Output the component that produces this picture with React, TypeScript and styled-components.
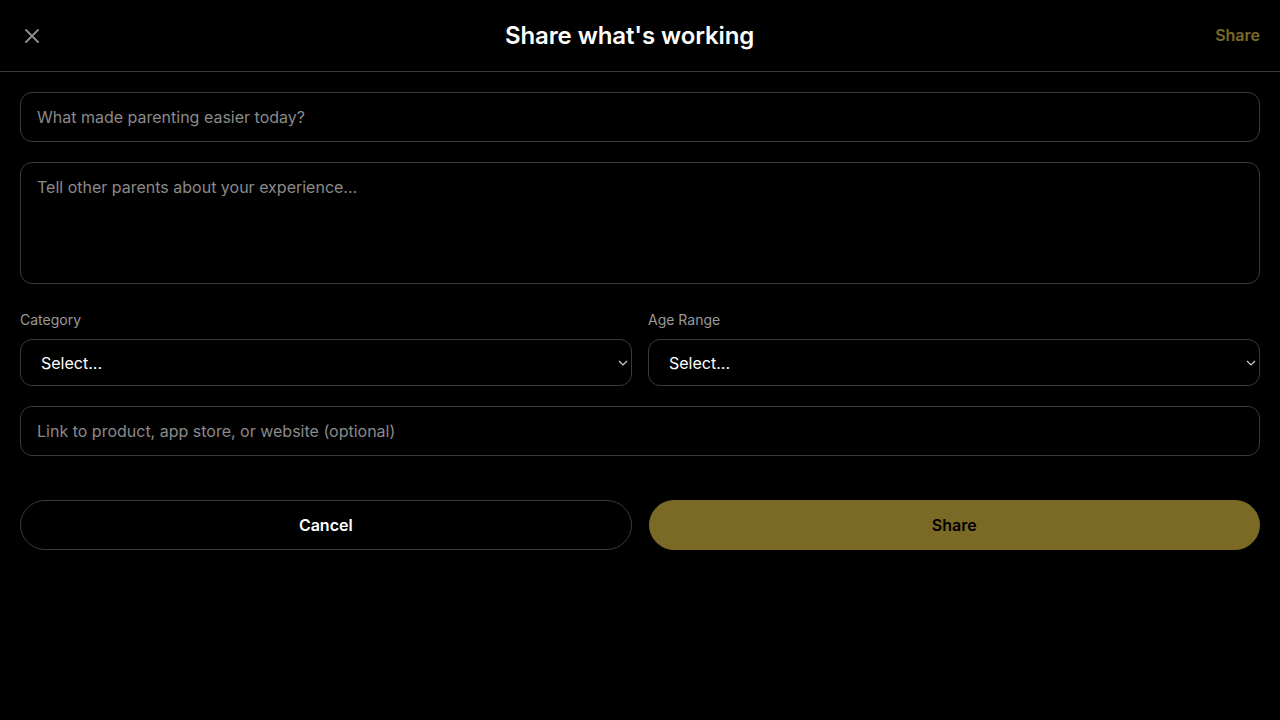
import React from "react";
import styled, { createGlobalStyle } from "styled-components";

const Global = createGlobalStyle`
  html, body { margin: 0; padding: 0; background: #000; }
  body { font-family: Inter, "Noto Sans", sans-serif; color: #fff; }
  * { box-sizing: border-box; }
`;

const Page = styled.div`
  width: 1280px;
  min-height: 720px;
  background: #000;
  display: flex;
  flex-direction: column;
`;

const Header = styled.header`
  height: 72px;
  border-bottom: 1px solid #3a3a3a;
  display: flex;
  justify-content: space-between;
  align-items: center;
  padding: 0 20px;
`;

const CloseButton = styled.button`
  background: none;
  border: none;
  padding: 0;
  width: 24px;
  height: 24px;
  display: flex;
  align-items: center;
  justify-content: center;
  color: #8a8a8a;
  cursor: pointer;
`;

const Title = styled.h1`
  margin: 0;
  font-size: 24px;
  font-weight: 600;
  color: #fff;
  letter-spacing: -0.1px;
`;

const HeaderAction = styled.button`
  background: none;
  border: none;
  padding: 0;
  font-family: inherit;
  font-size: 16px;
  font-weight: 600;
  color: #7a6a26;
  cursor: pointer;
  margin-top: -1px;
`;

const Form = styled.form`
  display: flex;
  flex-direction: column;
  gap: 20px;
  padding: 20px 20px 0;
`;

const fieldBase = `
  width: 100%;
  background: #000;
  border: 1px solid #3a3a3a;
  border-radius: 12px;
  color: #fff;
  font-family: Inter, "Noto Sans", sans-serif;
  font-size: 16px;
  outline: none;
  &::placeholder { color: #8a8a8a; }
`;

const TextInput = styled.input`
  ${fieldBase}
  height: 50px;
  padding: 0 16px;
`;

const TextArea = styled.textarea`
  ${fieldBase}
  height: 122px;
  padding: 13px 16px;
  resize: none;
  line-height: 22px;
  display: block;
`;

const Row = styled.div`
  display: grid;
  grid-template-columns: 1fr 1fr;
  gap: 16px;
  margin-top: 8px;
`;

const Field = styled.label`
  display: flex;
  flex-direction: column;
  gap: 11px;
`;

const Label = styled.span`
  font-size: 14px;
  color: #9a9a9a;
  line-height: 16px;
`;

const SelectWrap = styled.div`
  position: relative;
`;

const Select = styled.select`
  ${fieldBase}
  appearance: none;
  height: 47px;
  padding: 0 20px;
`;

const Chevron = styled.svg`
  position: absolute;
  right: 4px;
  top: 50%;
  transform: translateY(-50%);
  pointer-events: none;
`;

const Actions = styled.div`
  display: grid;
  grid-template-columns: 1fr 1fr;
  gap: 17px;
  margin-top: 24px;
`;

const Button = styled.button<{ $primary?: boolean }>`
  height: 50px;
  border-radius: 25px;
  font-family: Inter, "Noto Sans", sans-serif;
  font-size: 16px;
  font-weight: 600;
  cursor: pointer;
  border: 1px solid ${(p) => (p.$primary ? "#7a6a26" : "#3a3a3a")};
  background: ${(p) => (p.$primary ? "#7a6a26" : "#000")};
  color: ${(p) => (p.$primary ? "#000" : "#fff")};
`;

const SelectField = ({ label }: { label: string }) => (
  <Field>
    <Label>{label}</Label>
    <SelectWrap>
      <Select defaultValue="">
        <option value="">Select...</option>
      </Select>
      <Chevron width="10" height="6" viewBox="0 0 10 6" fill="none">
        <path d="M1 1l4 4 4-4" stroke="#cfcfcf" strokeWidth="1.2" />
      </Chevron>
    </SelectWrap>
  </Field>
);

export default function App() {
  return (
    <Page>
      <Global />
      <Header>
        <CloseButton type="button" aria-label="Close">
          <svg width="16" height="16" viewBox="0 0 16 16" fill="none">
            <path d="M2 2l12 12M14 2L2 14" stroke="#8a8a8a" strokeWidth="2" strokeLinecap="round" />
          </svg>
        </CloseButton>
        <Title>Share what's working</Title>
        <HeaderAction type="button">Share</HeaderAction>
      </Header>
      <Form onSubmit={(e) => e.preventDefault()}>
        <TextInput placeholder="What made parenting easier today?" />
        <TextArea placeholder="Tell other parents about your experience..." />
        <Row>
          <SelectField label="Category" />
          <SelectField label="Age Range" />
        </Row>
        <TextInput placeholder="Link to product, app store, or website (optional)" />
        <Actions>
          <Button type="button">Cancel</Button>
          <Button type="submit" $primary>
            Share
          </Button>
        </Actions>
      </Form>
    </Page>
  );
}
